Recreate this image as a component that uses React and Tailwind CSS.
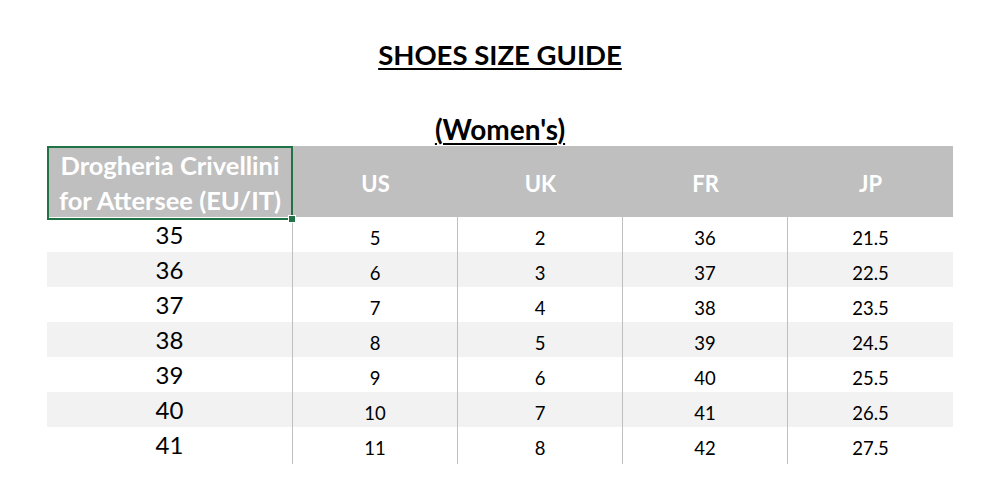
import React from "react";

const rows = [
  ["35", "5", "2", "36", "21.5"],
  ["36", "6", "3", "37", "22.5"],
  ["37", "7", "4", "38", "23.5"],
  ["38", "8", "5", "39", "24.5"],
  ["39", "9", "6", "40", "25.5"],
  ["40", "10", "7", "41", "26.5"],
  ["41", "11", "8", "42", "27.5"],
];

const font = { fontFamily: "Lato, 'Open Sans', sans-serif" };

export default function App() {
  return (
    <div className="w-[1000px] h-[500px] bg-white text-black flex flex-col" style={font}>
      <div className="pt-[38px] text-center">
        <span className="text-[27.5px] leading-[34px] font-bold underline underline-offset-[3px] decoration-2">
          SHOES SIZE GUIDE
        </span>
      </div>
      <div className="mt-[40px] text-center">
        <span className="text-[28px] leading-[34px] font-bold underline underline-offset-[3px] decoration-2">
          (Women's)
        </span>
      </div>

      <div className="ml-[47px] w-[906px]">
        {/* header */}
        <div className="grid grid-cols-[246px_165px_165px_165px_165px] h-[71px] bg-[#bfbfbf] text-white font-bold">
          <div className="relative border-2 border-[#217346] flex flex-col items-center justify-center text-[25.5px] leading-[35px]">
            <span>Drogheria Crivellini</span>
            <span>for Attersee (EU/IT)</span>
            <div className="absolute -right-[5px] -bottom-[5px] w-[8px] h-[8px] bg-[#217346] border border-white" />
          </div>
          {["US", "UK", "FR", "JP"].map((h) => (
            <div key={h} className="flex items-center justify-center text-[22px]">
              {h}
            </div>
          ))}
        </div>

        {/* body */}
        {rows.map((r, i) => (
          <div
            key={r[0]}
            className={
              "grid grid-cols-[246px_165px_165px_165px_165px] h-[35px] " +
              (i % 2 === 1 ? "bg-[#f2f2f2]" : "bg-white")
            }
          >
            <div className="flex items-center justify-center text-[24px] border-r border-[#bfbfbf] pb-[1px]">
              {r[0]}
            </div>
            {r.slice(1).map((v, j) => (
              <div
                key={j}
                className={
                  "flex items-center justify-center text-[18.5px] pt-[6px] " +
                  (j < 3 ? "border-r border-[#bfbfbf]" : "")
                }
              >
                {v}
              </div>
            ))}
          </div>
        ))}
      </div>
    </div>
  );
}
